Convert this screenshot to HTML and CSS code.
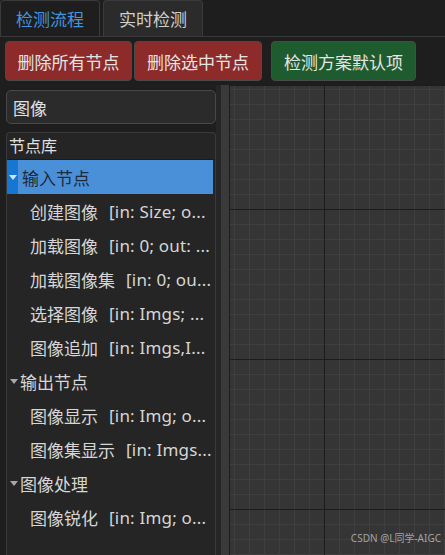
FILE: index.html
```html
<!DOCTYPE html>
<html>
	<head>
		<meta charset="utf-8">
		<title>检测流程</title>
		<link rel="stylesheet" href="styles.css">
	</head>
	<body>
		<div class="app">
			<div class="tabs">
				<span class="tab tab-on">检测流程</span>
				<span class="tab">实时检测</span>
			</div>
			<div class="toolbar">
				<button class="btn btn-red btn-a">删除所有节点</button>
				<button class="btn btn-red btn-b">删除选中节点</button>
				<button class="btn btn-green">检测方案默认项</button>
			</div>
			<div class="main">
				<div class="side">
					<div class="search">图像</div>
					<div class="tree">
						<div class="tree-head">节点库</div>
						<div class="row cat cat-on"><span class="arrow"></span>输入节点</div>
						<div class="row item">创建图像<span class="sig">[in: Size; o...</span></div>
						<div class="row item">加载图像<span class="sig">[in: 0; out: ...</span></div>
						<div class="row item">加载图像集<span class="sig">[in: 0; ou...</span></div>
						<div class="row item">选择图像<span class="sig">[in: Imgs; ...</span></div>
						<div class="row item">图像追加<span class="sig">[in: Imgs,I...</span></div>
						<div class="row cat"><span class="arrow"></span>输出节点</div>
						<div class="row item">图像显示<span class="sig">[in: Img; o...</span></div>
						<div class="row item">图像集显示<span class="sig">[in: Imgs...</span></div>
						<div class="row cat"><span class="arrow"></span>图像处理</div>
						<div class="row item">图像锐化<span class="sig">[in: Img; o...</span></div>
					</div>
				</div>
				<div class="splitter"></div>
				<div class="canvas">
					<span class="mark">CSDN @L同学-AIGC</span>
				</div>
			</div>
		</div>
	</body>
</html>
```

FILE: styles.css
```css
* {
	margin: 0;
	padding: 0;
	box-sizing: border-box;
}

body {
	background: #1e1e1e;
	font-family: "Noto Sans", "Noto Sans CJK SC", sans-serif;
	color: #d6d6d6;
}

.app {
	width: 445px;
	height: 555px;
	overflow: hidden;
	display: flex;
	flex-direction: column;
}

.tabs {
	height: 37px;
	display: flex;
	gap: 3px;
	border-bottom: 1px solid #3a3a3a;
}

.tab {
	width: 100px;
	height: 36px;
	display: flex;
	align-items: center;
	justify-content: center;
	font-size: 17px;
	color: #cfcfcf;
	background: #2b2b2b;
	border: 1px solid #3a3a3a;
	border-bottom: none;
	border-radius: 4px 4px 0 0;
}

.tab-on {
	background: #1e1e1e;
	color: #4294de;
}

.toolbar {
	height: 48px;
	display: flex;
	align-items: center;
	padding: 0 5px;
}

.btn {
	height: 40px;
	font-family: inherit;
	font-size: 17px;
	color: #e4e4e4;
	border: 1px solid #4a4a4a;
	border-radius: 4px;
}

.btn-red {
	background: #8d2b2b;
}

.btn-a {
	width: 127px;
}

.btn-b {
	width: 128px;
	margin-left: 2px;
}

.btn-green {
	width: 145px;
	margin-left: 9px;
	background: #1e5b2e;
}

.main {
	flex: 1;
	display: flex;
	min-height: 0;
}

.side {
	width: 216px;
	padding: 5px 0 0 6px;
	display: flex;
	flex-direction: column;
	gap: 8px;
}

.search {
	height: 34px;
	background: #2b2b2b;
	border: 1px solid #484848;
	border-radius: 5px;
	padding-left: 6px;
	display: flex;
	align-items: center;
	font-size: 17px;
	color: #e0e0e0;
}

.tree {
	flex: 1;
	background: #252525;
	border: 1px solid #3a3a3a;
	border-bottom: none;
	border-radius: 4px 4px 0 0;
}

.tree-head {
	height: 27px;
	padding-left: 2px;
	font-size: 16px;
	line-height: 27px;
	color: #e0e0e0;
	border-bottom: 1px solid #1a1a1a;
}

.row {
	height: 34px;
	display: flex;
	align-items: center;
	font-size: 17px;
	white-space: nowrap;
}

.item {
	padding-left: 23px;
}

.sig {
	margin-left: 11px;
	letter-spacing: 0.2px;
}

.cat .arrow {
	width: 13px;
	height: 34px;
	display: flex;
	align-items: center;
	justify-content: center;
}

.cat .arrow::before {
	content: "";
	border-left: 4px solid transparent;
	border-right: 4px solid transparent;
	border-top: 5px solid #a8a8a8;
}

.cat-on {
	background: #4a90d9;
	color: #1e2a38;
	margin-right: 2px;
}

.cat-on .arrow {
	width: 11px;
	margin-right: 4px;
	background: #1677d2;
}

.cat-on .arrow::before {
	border-top-color: #cfe3f7;
}

.splitter {
	width: 13px;
	border-left: 5px solid #262626;
	background: #3a3a3a;
}

.canvas {
	flex: 1;
	position: relative;
	border-top: 1px solid #1c1c1c;
	border-left: 1px solid #1c1c1c;
	background-color: #353535;
	background-image:
		linear-gradient(to right, #1c1c1c 1px, transparent 1px),
		linear-gradient(to bottom, #1c1c1c 1px, transparent 1px),
		linear-gradient(to right, #3f3f3f 1px, transparent 1px),
		linear-gradient(to bottom, #3f3f3f 1px, transparent 1px);
	background-size: 150px 150px, 150px 150px, 15px 15px, 15px 15px;
	background-position: 94px 123px;
}

.mark {
	position: absolute;
	right: 4px;
	bottom: 10px;
	font-size: 10px;
	color: #a3a3a3;
}
```
